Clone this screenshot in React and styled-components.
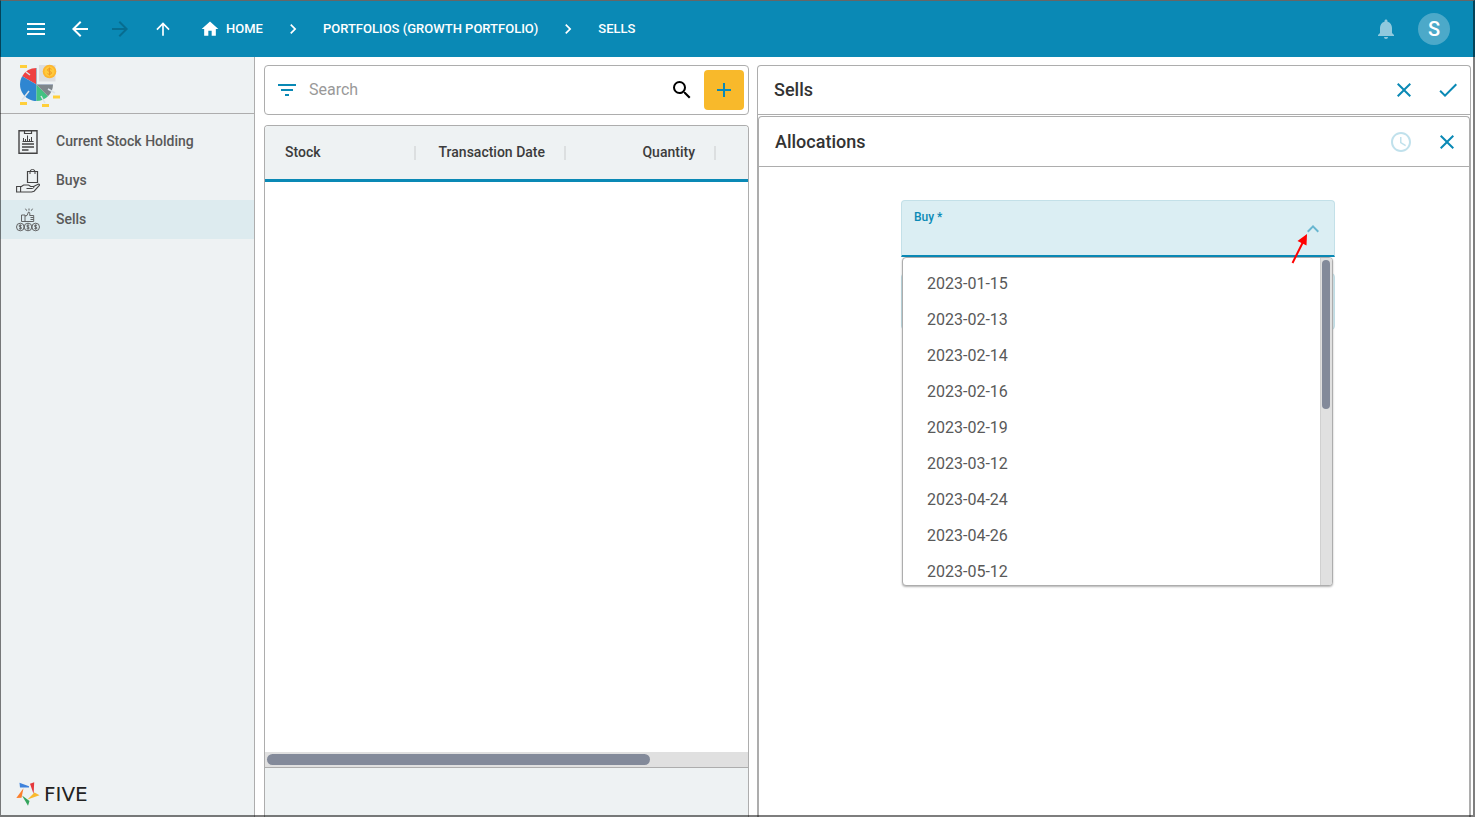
import React from 'react';
import styled, { createGlobalStyle } from 'styled-components';
import {
    MdMenu, MdArrowBack, MdArrowForward, MdArrowUpward, MdHome, MdChevronRight,
    MdNotifications, MdFilterList, MdSearch, MdAdd, MdClose, MdCheck,
    MdAccessTime, MdKeyboardArrowUp,
} from 'react-icons/md';

const BLUE = '#0a89b5';
const LINE = '#adadad';
const PALE = '#eef2f3';

const GlobalStyle = createGlobalStyle`
    * {
        box-sizing: border-box;
    }
    body {
        margin: 0;
        font-family: Roboto, 'Liberation Sans', sans-serif;
        color: #3c3c3c;
        background: #fff;
    }
    svg {
        display: block;
        flex-shrink: 0;
    }
`

const Page = styled.div`
    position: relative;
    display: flex;
    flex-direction: column;
    height: 100vh;
    overflow: hidden;

    /* window frame lies over everything */
    &::after {
        content: '';
        position: absolute;
        inset: 0;
        border: solid rgba(0, 0, 0, 0.5);
        border-width: 1px 2px 2px 1px;
        border-top-color: #666;
        pointer-events: none;
    }
`

const Header = styled.header`
    display: flex;
    align-items: center;
    justify-content: space-between;
    height: 57px;
    flex-shrink: 0;
    padding: 1px 25px 0 16px;
    color: #fff;
    background: ${BLUE};
`

const Group = styled.div`
    display: flex;
    align-items: center;
    gap: ${(p) => p.$gap || 0}px;
`

const IconButton = styled.button`
    display: flex;
    align-items: center;
    justify-content: center;
    width: 40px;
    height: 40px;
    padding: 0;
    border: 0;
    border-radius: 4px;
    color: ${(p) => p.$color || 'inherit'};
    background: ${(p) => p.$bg || 'transparent'};
    opacity: ${(p) => p.$opacity || 1};
    cursor: pointer;
`

const Crumbs = styled.nav`
    display: flex;
    align-items: center;
    gap: 20px;
    margin-left: 17px;
`

const Crumb = styled.a`
    display: flex;
    align-items: center;
    gap: 6px;
    color: #fff;
    font-size: 13px;
    font-weight: 500;
    line-height: 20px;
    text-decoration: none;
    white-space: nowrap;
`

const Avatar = styled.button`
    width: 32px;
    height: 32px;
    padding: 0;
    border: 0;
    border-radius: 50%;
    color: #fff;
    font: 500 20px/32px Roboto, sans-serif;
    background: rgba(255, 255, 255, 0.27);
`

const Body = styled.div`
    display: flex;
    flex: 1;
    min-height: 0;
`

const Sidebar = styled.aside`
    display: flex;
    flex-direction: column;
    width: 255px;
    flex-shrink: 0;
    border-right: 1px solid ${LINE};
    background: ${PALE};
`

const LogoRow = styled.div`
    height: 57px;
    padding: 3px 10px;
    border-bottom: 1px solid ${LINE};
`

const Menu = styled.ul`
    flex: 1;
    margin: 0;
    padding: 8px 0 0;
    list-style: none;
`

const MenuLink = styled.a`
    display: flex;
    align-items: center;
    gap: 16px;
    height: 39px;
    padding: 0 16px;
    color: #595959;
    font-size: 14px;
    font-weight: 500;
    text-decoration: none;
    background: ${(p) => (p.$active ? '#ddebef' : 'transparent')};
`

const MenuText = styled.span`
    padding-bottom: 2px;
`

const Brand = styled.div`
    display: flex;
    align-items: center;
    gap: 4px;
    padding: 0 16px 11px;
    color: #222;
    font-family: 'DejaVu Sans', sans-serif;
    font-size: 20px;
    line-height: 24px;
`

const Main = styled.main`
    display: grid;
    grid-template-columns: minmax(0, 485fr) minmax(0, 714fr);
    gap: 8px;
    flex: 1;
    min-width: 0;
    padding: 8px 4px 0 9px;
`

const Column = styled.section`
    display: flex;
    flex-direction: column;
    gap: 10px;
    min-height: 0;
`

const SearchBar = styled.div`
    display: flex;
    align-items: center;
    height: 50px;
    flex-shrink: 0;
    padding: 0 4px 0 2px;
    border: 1px solid ${LINE};
    border-radius: 4px;
`

const SearchInput = styled.input`
    flex: 1;
    min-width: 0;
    margin: 0 0 0 2px;
    padding: 0;
    border: 0;
    outline: 0;
    color: #3c3c3c;
    font: 400 16px/24px Roboto, sans-serif;
    background: transparent;
    &::placeholder {
        color: #999;
        opacity: 1;
    }
`

const Grid = styled.div`
    display: flex;
    flex-direction: column;
    flex: 1;
    min-height: 0;
    overflow: hidden;
    border: 1px solid ${LINE};
    border-bottom: 0;
    border-radius: 4px 4px 0 0;
`

const GridHead = styled.div`
    flex-shrink: 0;
    overflow: hidden;
    padding-left: 1px;
    border-bottom: 3px solid ${BLUE};
    background: ${PALE};
`

const Table = styled.table`
    width: 450px;
    table-layout: fixed;
    border-collapse: collapse;
`

const Th = styled.th`
    height: 53px;
    padding: 0;
    font-size: 14px;
    font-weight: 500;
    text-align: ${(p) => p.$align || 'left'};
`

const ThLabel = styled.span`
    display: block;
    padding: 0 19px 2px;
    border-right: 2px solid #dcdfe0;
    line-height: 12px;
    white-space: nowrap;
`

const GridBody = styled.div`
    flex: 1;
`

const HTrack = styled.div`
    height: 16px;
    flex-shrink: 0;
    padding: 2px;
    border-bottom: 1px solid ${LINE};
    background: #e0e0e0;
`

const HThumb = styled.div`
    width: 80%;
    height: 11px;
    border-radius: 6px;
    background: #838a9a;
`

const GridFoot = styled.div`
    height: 49px;
    flex-shrink: 0;
    background: ${PALE};
`

const Panel = styled.section`
    display: flex;
    flex-direction: column;
    flex: ${(p) => (p.$inner ? 1 : 'initial')};
    min-height: 0;
    margin-top: ${(p) => (p.$inner ? 1 : 0)}px;
    border: 1px solid ${LINE};
    border-bottom: 0;
    border-radius: 4px 4px 0 0;
`

const PanelHead = styled.div`
    display: flex;
    align-items: center;
    justify-content: space-between;
    height: ${(p) => p.$height}px;
    flex-shrink: 0;
    padding: 0 2px 0 16px;
    border-bottom: 1px solid ${LINE};
`

const Title = styled.h2`
    margin: 0;
    color: #333;
    font-size: 18px;
    font-weight: 500;
    line-height: 24px;
`

const Form = styled.form`
    display: flex;
    flex-direction: column;
    align-items: center;
    gap: 16px;
    padding: 33px 0 0 8px;
`

const Field = styled.div`
    position: relative;
    width: 434px;
    max-width: 100%;
    height: 57px;
    border: 1px solid #c3e0e8;
    border-bottom: ${(p) => (p.$focus ? `2px solid ${BLUE}` : '1px solid #c3e0e8')};
    border-radius: 4px 4px ${(p) => (p.$focus ? '0 0' : '4px 4px')};
    background: #dbeef3;
`

const Label = styled.label`
    display: block;
    padding: 8px 12px 0;
    color: ${BLUE};
    font-size: 12px;
    font-weight: 500;
    line-height: 16px;
`

const Select = styled.select`
    display: block;
    width: 100%;
    height: 28px;
    padding: 0 12px;
    border: 0;
    outline: 0;
    appearance: none;
    font: 400 16px/24px Roboto, sans-serif;
    background: transparent;
`

const Caret = styled(MdKeyboardArrowUp)`
    position: absolute;
    top: 16px;
    right: 9px;
    color: ${BLUE};
    opacity: 0.55;
`

const Popup = styled.div`
    position: absolute;
    z-index: 1;
    top: 56px;
    left: 0;
    right: 1px;
    display: flex;
    height: 329px;
    overflow: hidden;
    border: 1px solid ${LINE};
    border-radius: 4px;
    background: #fff;
    box-shadow: 0 1px 2px rgba(0, 0, 0, 0.3);
`

const Options = styled.ul`
    flex: 1;
    margin: 0;
    padding: 8px 0;
    overflow: hidden;
    list-style: none;
`

const Option = styled.li`
    padding: 0 24px;
    color: #595959;
    font-size: 16px;
    line-height: 36px;
`

const VTrack = styled.div`
    width: 12px;
    padding: 2px 2px 2px 1px;
    border-left: 1px solid #d0d0d0;
    background: #e0e0e0;
`

const VThumb = styled.div`
    height: 149px;
    border-radius: 4px;
    background: #838a9a;
`

const Pointer = styled.svg`
    position: absolute;
    z-index: 2;
    top: 32px;
    right: 24px;
`

const PieLogo = () => (
    <svg width="60" height="50" viewBox="0 0 60 50">
        <path d="M26.5 24.5V8A16.5 16.5 0 0 0 12.2 16.3Z" fill="#ee4242" />
        <path d="M26.5 24.5L12.2 16.3A16.5 16.5 0 0 0 26.5 41Z" fill="#2f86d1" />
        <path d="M26.5 24.5V41A16.5 16.5 0 0 0 38 36.2Z" fill="#42c282" />
        <path d="M26.5 24.5L38 36.2A16.5 16.5 0 0 0 43 24.5Z" fill="#7f878c" />
        <path d="M26.5 8V24.5H43" fill="none" stroke="#a6b2c2" />
        <path d="M29 5h16.500v16.500h-16.500z" fill="#dcdee0" />
        <circle cx="39.500" cy="11.500" r="6.800" fill="#fdb62f" />
        <circle cx="39.500" cy="11.500" r="5" fill="#ffca3c" />
        <path d="M41.500 9.300c-1-1-4-.8-4 .7 0 1.800 4 1 4 3 0 1.500-3 1.700-4 .6M39.500 7.500v8" fill="none" stroke="#f09a24" />
        <path d="M16 12l4 3M12 40l7-9M35 43l-4-7M45 33l-7-4" stroke="#dce3ea" strokeWidth="1.500" />
        <path d="M10 5h7v3h-7zM10 42h7v3h-7zM32 44h7v3h-7zM43 35.500h7v3h-7z" fill="#ffcf3a" />
    </svg>
)

const ReportIcon = () => (
    <svg width="24" height="24" viewBox="0 0 24 24" fill="none" stroke="#444">
        <path d="M3 .7h18v22.600H3z" strokeWidth="1.400" />
        <path d="M8.500 1v2.500h7V1" strokeWidth="1.200" />
        <path d="M6.500 11.500h11M7.500 11V8M9.500 11V9M11.500 11V5.500M13.500 11V9M15.500 11V7" />
        <path d="M6 14h12M6 17h12M6 20h6.500" strokeWidth="1.300" />
    </svg>
)

const BuyIcon = () => (
    <svg width="24" height="24" viewBox="0 0 24 24" fill="none" stroke="#444">
        <path d="M11.500 2.500h10v11h-10z" strokeWidth="1.200" />
        <path d="M14 5V2.500a2.500 2 0 0 1 5 0V5" />
        <path d="M.6 17.500h4v5.500h-4zM4.600 18l3-2h5l2 1.500h3l4.500-2.300c1.500-.3 1.700.6 1 1.500l-5 5.500-2.500.8h-11" strokeWidth="1.100" />
        <path d="M10.500 19.500h6l2-1.500" />
    </svg>
)

const SellIcon = () => (
    <svg width="24" height="24" viewBox="0 0 24 24" fill="none" stroke="#555" strokeWidth=".9">
        <path d="M13 .5v2M9.500.7l1.200 2M16.500.7l-1.200 2" />
        <path d="M5.500 7h3.500v6.500H5.500zM9 8l2-.5 1.500-3.500c1.300 0 1.500 1 1.200 3.500h4v6H9M14.500 9.500h3M14.500 11.500h3" />
        <circle cx="4.300" cy="19" r="3.800" />
        <circle cx="12" cy="19" r="3.800" />
        <circle cx="19.700" cy="19" r="3.800" />
        {[4.3, 12, 19.7].map((x) => (
            <path key={x} d={`M${x + 1.3} 17.600c-1-.8-2.600-.5-2.600.4 0 1.200 2.600.8 2.600 2 0 1-1.800 1.200-2.600.4M${x} 16.500v5`} />
        ))}
    </svg>
)

const FiveMark = () => (
    <svg width="24" height="24" viewBox="0 0 24 24">
        <path d="M3.500.8l9.500 3.500V5.500H4z" fill="#3f83dc" />
        <path d="M14 1.800l4.200-1.500-.6 11.700z" fill="#e5383b" />
        <path d="M23.500 13.300L18.500 10.500 11.500 17.500z" fill="#f9b92e" />
        <path d="M6 13.500l7.500 5.500-1.500 4.800z" fill="#34a45c" />
        <path d="M7.500 6.200L5.500 15.800.3 16z" fill="#fb7f2c" />
    </svg>
)

const menu = [
    { name: 'Current Stock Holding', icon: <ReportIcon /> },
    { name: 'Buys', icon: <BuyIcon /> },
    { name: 'Sells', icon: <SellIcon />, active: true },
]

const dates = [
    '2023-01-15', '2023-02-13', '2023-02-14', '2023-02-16', '2023-02-19',
    '2023-03-12', '2023-04-24', '2023-04-26', '2023-05-12',
]

const TopBar = () => (
    <Header>
        <Group $gap={3}>
            <Group>
                <Group $gap={4}>
                    <IconButton aria-label="Menu"><MdMenu size={24} /></IconButton>
                    <IconButton aria-label="Back"><MdArrowBack size={24} /></IconButton>
                </Group>
                <IconButton aria-label="Forward" $color="#000" $opacity={0.2}><MdArrowForward size={24} /></IconButton>
            </Group>
            <Group>
                <IconButton aria-label="Up"><MdArrowUpward size={20} /></IconButton>
                <Crumbs aria-label="Breadcrumb">
                    <Crumb href="#home"><MdHome size={20} />HOME</Crumb>
                    <MdChevronRight size={20} />
                    <Crumb href="#portfolios">PORTFOLIOS (GROWTH PORTFOLIO)</Crumb>
                    <MdChevronRight size={20} />
                    <Crumb href="#sells">SELLS</Crumb>
                </Crumbs>
            </Group>
        </Group>
        <Group $gap={12}>
            <IconButton aria-label="Notifications" $opacity={0.55}><MdNotifications size={24} /></IconButton>
            <Avatar aria-label="Account">S</Avatar>
        </Group>
    </Header>
)

const SideMenu = () => (
    <Sidebar>
        <LogoRow><PieLogo /></LogoRow>
        <Menu>
            {menu.map((item) => (
                <li key={item.name}>
                    <MenuLink href="#" $active={item.active}>
                        {item.icon}
                        <MenuText>{item.name}</MenuText>
                    </MenuLink>
                </li>
            ))}
        </Menu>
        <Brand><FiveMark />FIVE</Brand>
    </Sidebar>
)

const StockList = () => (
    <Column>
        <SearchBar>
            <IconButton aria-label="Filter" $color={BLUE}><MdFilterList size={24} /></IconButton>
            <SearchInput type="text" placeholder="Search" aria-label="Search" />
            <Group $gap={2}>
                <IconButton aria-label="Run search" $color="#000"><MdSearch size={24} /></IconButton>
                <IconButton aria-label="Add" $color={BLUE} $bg="#f8b92b"><MdAdd size={24} /></IconButton>
            </Group>
        </SearchBar>
        <Grid>
            <GridHead>
                <Table>
                    <thead>
                        <tr>
                            <Th><ThLabel>Stock</ThLabel></Th>
                            <Th $align="right"><ThLabel>Transaction Date</ThLabel></Th>
                            <Th $align="right"><ThLabel>Quantity</ThLabel></Th>
                        </tr>
                    </thead>
                </Table>
            </GridHead>
            <GridBody />
            <HTrack><HThumb /></HTrack>
            <GridFoot />
        </Grid>
    </Column>
)

const SellForm = () => (
    <Panel>
        <PanelHead $height={49}>
            <Title>Sells</Title>
            <Group $gap={4}>
                <IconButton aria-label="Cancel" $color={BLUE}><MdClose size={24} /></IconButton>
                <IconButton aria-label="Save" $color={BLUE}><MdCheck size={24} /></IconButton>
            </Group>
        </PanelHead>
        <Panel $inner>
            <PanelHead $height={50}>
                <Title>Allocations</Title>
                <Group $gap={6}>
                    <IconButton aria-label="History" $color={BLUE} $opacity={0.25}><MdAccessTime size={24} /></IconButton>
                    <IconButton aria-label="Close" $color={BLUE}><MdClose size={24} /></IconButton>
                </Group>
            </PanelHead>
            <Form>
                <Field $focus>
                    <Label htmlFor="buy">Buy *</Label>
                    <Select id="buy" defaultValue="">
                        <option value="" />
                        {dates.map((d) => <option key={d}>{d}</option>)}
                    </Select>
                    <Caret size={24} />
                    <Popup>
                        <Options role="listbox" aria-label="Buy">
                            {dates.map((d) => <Option key={d} role="option">{d}</Option>)}
                        </Options>
                        <VTrack><VThumb /></VTrack>
                    </Popup>
                    <Pointer width="20" height="32" viewBox="0 0 20 32">
                        <path d="M2.500 30L13 9" stroke="#f00" strokeWidth="2" />
                        <path d="M17 1L16.500 12.500 7.500 8z" fill="#f00" />
                    </Pointer>
                </Field>
                <Field />
            </Form>
        </Panel>
    </Panel>
)

const App = () => {
    return (
        <Page>
            <GlobalStyle />
            <TopBar />
            <Body>
                <SideMenu />
                <Main>
                    <StockList />
                    <SellForm />
                </Main>
            </Body>
        </Page>
    )
}

export default App;
